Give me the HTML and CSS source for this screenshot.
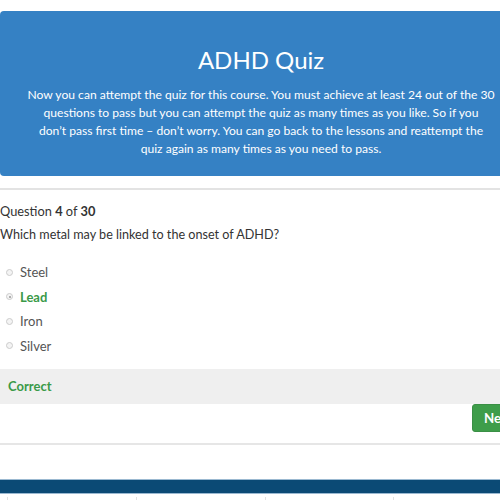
FILE: index.html
```html
<!DOCTYPE html>
<html>
<head>
<meta charset="utf-8">
<link rel="stylesheet" href="styles.css">
</head>
<body>
<div class="wrap">
  <div class="hero">
    <h1 class="title">ADHD Quiz</h1>
    <p class="intro">Now you can attempt the quiz for this course. You must achieve at least 24 out of the 30<br>questions to pass but you can attempt the quiz as many times as you like. So if you<br>don’t pass first time – don’t worry. You can go back to the lessons and reattempt the<br>quiz again as many times as you need to pass.</p>
  </div>
  <div class="rule"></div>
  <div class="quiz">
    <div class="counter">Question <b>4</b> of <b>30</b></div>
    <div class="question">Which metal may be linked to the onset of ADHD?</div>
    <ul class="options">
      <li class="opt"><span class="radio"></span>Steel</li>
      <li class="opt correct"><span class="radio checked"></span>Lead</li>
      <li class="opt"><span class="radio"></span>Iron</li>
      <li class="opt"><span class="radio"></span>Silver</li>
    </ul>
    <div class="feedback">Correct</div>
    <div class="actions"><button class="next">Next</button></div>
  </div>
  <div class="rule rule-bottom"></div>
  <div class="footer-bar"></div>
  <div class="ticks"><span></span><span></span><span></span><span></span></div>
</div>
</body>
</html>
```
FILE: styles.css
```css
html, body { margin: 0; padding: 0; background: #fff; overflow: hidden; }
body { font-family: "Lato", "Noto Sans", sans-serif; color: #333; }
.wrap { width: 522px; }
.hero {
  margin-top: 11px;
  height: 165px;
  box-sizing: border-box;
  background: #3581c4;
  border-radius: 4px;
  color: #fff;
  text-align: center;
  padding: 34px 20px 0 20px;
}
.title { margin: 0; font-size: 24px; font-weight: 400; line-height: 30px; }
.intro { margin: 11px 0 0; font-size: 12.1px; line-height: 18px; }
.rule { margin-top: 12px; height: 2px; background: #e3e3e3; }
.quiz { padding-top: 12px; }
.counter { font-size: 12.8px; line-height: 18px; }
.question { font-size: 12.6px; line-height: 18px; margin-top: 6px; }
.options { list-style: none; margin: 16px 0 0; padding: 0; }
.opt { display: flex; align-items: center; height: 24.5px; font-size: 13px; color: #555; padding-left: 6px; }
.opt.correct { color: #3a9a48; font-weight: 700; }
.radio { width: 7px; height: 7px; border: 1px solid #ccc; border-radius: 50%; margin-right: 7px; box-sizing: border-box; background: #f4f4f4; position: relative; }
.radio.checked::after { content: ""; position: absolute; left: 1.5px; top: 1.5px; width: 2px; height: 2px; background: #999; border-radius: 50%; }
.feedback { margin-top: 11px; height: 35px; background: #efefef; color: #3a9a48; font-weight: 700; font-size: 13px; line-height: 35px; padding-left: 8px; }
.actions { display: flex; justify-content: flex-end; }
.next { width: 50px; height: 28px; margin: 0; border: 1px solid #3a8f45; background: #3e9d4a; color: #fff; font-family: inherit; font-weight: 700; font-size: 13.3px; border-radius: 3px; text-align: left; padding-left: 11px; }
.rule-bottom { margin-top: 11px; height: 2px; background: #e6e6e6; }
.footer-bar { margin-top: 34px; height: 13px; background: #0b4a75; border-top: 1px solid #9bb9d1; border-bottom: 1px solid #9bb9d1; }
.ticks { display: flex; height: 6px; }
.ticks span { width: 135px; border-left: 1px solid #e2e2e2; margin-top: 3px; }
.ticks span:first-child { margin-left: 7px; }
```
